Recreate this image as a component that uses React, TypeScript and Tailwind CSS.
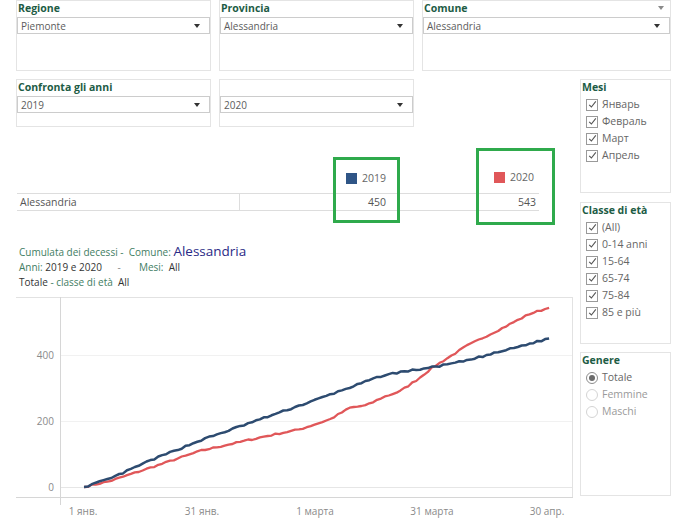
import React from 'react';

const FONT = { fontFamily: '"Open Sans", "Noto Sans", sans-serif' };

// anchor points read off the picture: [page x, cumulative deaths]
const BLUE: [number, number][] = [
  [84, 0], [110, 25], [150, 80], [201, 142], [260, 205], [314, 262], [350, 302],
  [383, 338], [400, 348], [433, 363], [467, 383], [500, 410], [549, 450],
];
const RED: [number, number][] = [
  [84, 0], [110, 18], [150, 58], [201, 110], [260, 150], [300, 175], [330, 205],
  [350, 240], [367, 248], [383, 272], [400, 290], [417, 325], [433, 363],
  [467, 428], [500, 478], [530, 525], [549, 543],
];

function seeded(seed: number) {
  let s = seed;
  return () => {
    s = (s * 16807) % 2147483647;
    return s / 2147483647;
  };
}

function buildPath(anchors: [number, number][], seed: number) {
  const rand = seeded(seed);
  const pts: string[] = [];
  for (let day = 0; day <= 119; day++) {
    const px = 84 + day * 3.908;
    let v = anchors[anchors.length - 1][1];
    for (let i = 0; i < anchors.length - 1; i++) {
      const [x0, v0] = anchors[i];
      const [x1, v1] = anchors[i + 1];
      if (px >= x0 && px <= x1) {
        v = v0 + ((px - x0) / (x1 - x0)) * (v1 - v0);
        break;
      }
    }
    if (day > 0 && day < 119) v += (rand() - 0.5) * 5;
    const x = px - 16;
    const y = 190 - v * 0.33;
    pts.push(`${x.toFixed(1)},${y.toFixed(1)}`);
  }
  return pts.join(' ');
}

function Caret({ color = '#333' }: { color?: string }) {
  return (
    <span
      className="block h-0 w-0 border-x-[3px] border-t-[4px] border-x-transparent"
      style={{ borderTopColor: color }}
    />
  );
}

function Dropdown({ value }: { value: string }) {
  return (
    <div className="flex h-[17px] items-center justify-between border border-[#cccccc] bg-white pl-[3px] pr-[9px] text-[10px] leading-none text-[#5c5c5c]">
      <span>{value}</span>
      <Caret />
    </div>
  );
}

function FilterBox({ label, value, className, menu }: { label?: string; value: string; className: string; menu?: boolean }) {
  return (
    <div className={`relative flex flex-col border border-[#e4e4e4] bg-white ${className}`}>
      <div className="flex h-[16px] items-center pl-[1px] text-[10.5px] font-bold text-[#1d5c45]">{label}</div>
      {menu && (
        <div className="absolute right-[6px] top-[5px]">
          <Caret color="#8a8a8a" />
        </div>
      )}
      <Dropdown value={value} />
    </div>
  );
}

function Check({ label }: { label: string }) {
  return (
    <div className="flex h-[17px] items-center gap-[4px] pl-[5px]">
      <span className="flex h-[12px] w-[12px] items-center justify-center border border-[#9a9a9a] bg-white">
        <svg width="9" height="9" viewBox="0 0 9 9">
          <path d="M1.2 4.8 L3.4 7 L7.8 1.4" fill="none" stroke="#555" strokeWidth="1.1" />
        </svg>
      </span>
      <span className="text-[10.5px] text-[#666]">{label}</span>
    </div>
  );
}

function Radio({ label, on }: { label: string; on?: boolean }) {
  return (
    <div className="flex h-[17px] items-center gap-[4px] pl-[5px]">
      <span className={`flex h-[12px] w-[12px] items-center justify-center rounded-full border ${on ? 'border-[#8c8c8c]' : 'border-[#d4d4d4]'}`}>
        {on && <span className="h-[6px] w-[6px] rounded-full bg-[#6b6b6b]" />}
      </span>
      <span className={`text-[10.5px] ${on ? 'text-[#666]' : 'text-[#9a9a9a]'}`}>{label}</span>
    </div>
  );
}

function Panel({ title, h, children }: { title: string; h: string; children: React.ReactNode }) {
  return (
    <div className={`flex flex-col border border-[#e4e4e4] bg-white ${h}`}>
      <div className="flex h-[16px] items-center pl-[1px] text-[10.5px] font-bold text-[#1d5c45]">{title}</div>
      {children}
    </div>
  );
}

function Chart() {
  const yTicks = [
    { y: 58, t: '400' },
    { y: 124, t: '200' },
    { y: 190, t: '0' },
  ];
  const xTicks = [
    { x: 67, t: '1 янв.' },
    { x: 186, t: '31 янв.' },
    { x: 299, t: '1 марта' },
    { x: 416, t: '31 марта' },
    { x: 531, t: '30 апр.' },
  ];
  return (
    <svg width="557" height="232" className="block" style={FONT}>
      <line x1="44" y1="58.5" x2="556" y2="58.5" stroke="#f1f1f1" />
      <line x1="44" y1="124.5" x2="556" y2="124.5" stroke="#f1f1f1" />
      <line x1="44" y1="190.5" x2="556" y2="190.5" stroke="#e6e6e6" />
      <line x1="0" y1="0.5" x2="557" y2="0.5" stroke="#e2e2e2" />
      <line x1="556.5" y1="0" x2="556.5" y2="200" stroke="#e2e2e2" />
      <line x1="0" y1="200.5" x2="557" y2="200.5" stroke="#d6d6d6" />
      <line x1="44.5" y1="0" x2="44.5" y2="208" stroke="#d6d6d6" />
      {yTicks.map(t => (
        <text key={t.t} x="38" y={t.y + 4} textAnchor="end" fontSize="10" fill="#8a8a8a">{t.t}</text>
      ))}
      {xTicks.map(t => (
        <text key={t.t} x={t.x} y="218" textAnchor="middle" fontSize="10" fill="#8a8a8a">{t.t}</text>
      ))}
      <polyline points={buildPath(RED, 7)} fill="none" stroke="#e05759" strokeWidth="2.3" strokeLinejoin="round" />
      <polyline points={buildPath(BLUE, 13)} fill="none" stroke="#2d4b70" strokeWidth="2.5" strokeLinejoin="round" />
    </svg>
  );
}

export default function App() {
  return (
    <div className="relative h-[529px] w-[700px] overflow-hidden bg-white pl-4" style={FONT}>
      <div className="flex gap-2">
        <FilterBox label="Regione" value="Piemonte" className="h-[71px] w-[195px]" />
        <FilterBox label="Provincia" value="Alessandria" className="h-[71px] w-[195px]" />
        <FilterBox label="Comune" value="Alessandria" className="h-[71px] w-[249px]" menu />
      </div>

      <div className="mt-2 flex gap-[7px]">
        <div className="w-[557px]">
          <div className="flex gap-2">
            <FilterBox label="Confronta gli anni" value="2019" className="h-[48px] w-[195px]" />
            <FilterBox value="2020" className="h-[48px] w-[195px]" />
          </div>

          <div className="ml-[1px] mt-[44px] grid h-[12px] grid-cols-[223px_149px_150px] items-center text-[10.5px] text-[#666]">
            <div />
            <div className="flex items-center justify-end gap-[5px] pr-[3px]">
              <span className="h-[11px] w-[11px] bg-[#2f5586]" />
              <span>2019</span>
            </div>
            <div className="flex -translate-y-[1px] items-center justify-end gap-[5px] pr-[5px]">
              <span className="h-[11px] w-[11px] bg-[#e05759]" />
              <span>2020</span>
            </div>
          </div>

          <div className="ml-[1px] mt-[10px] grid h-[18px] w-[522px] grid-cols-[223px_149px_150px] border-y border-[#dddddd] text-[10.5px] text-[#555]">
            <div className="flex items-center border-r border-[#dddddd] pl-[3px] pt-[1px]">Alessandria</div>
            <div className="flex items-center justify-end pr-[3px] pt-[1px]">450</div>
            <div className="flex items-center justify-end pr-[3px] pt-[1px]">543</div>
          </div>

          <div className="mt-[32px] pl-[3px]">
            <div className="flex h-[17px] items-baseline whitespace-pre text-[10px] leading-[17px] text-[#3f7d63]">
              <span>Cumulata dei decessi -  Comune: </span>
              <span className="text-[13.5px] text-[#2a2a86]">Alessandria</span>
            </div>
            <div className="flex h-[15px] items-center whitespace-pre text-[10px] text-[#333]">
              <span className="text-[#3f7d63]">Anni: </span>
              <span>2019 e 2020</span>
              <span className="text-[#888]">      -       </span>
              <span className="text-[#3f7d63]">Mesi:  </span>
              <span>All</span>
            </div>
            <div className="flex h-[15px] items-center whitespace-pre text-[10px] text-[#333]">
              <span>Totale </span>
              <span className="text-[#3f7d63]">- classe di età  </span>
              <span>All</span>
            </div>
          </div>

          <div className="mt-[7px]">
            <Chart />
          </div>
        </div>

        <div className="flex w-[91px] flex-col">
          <Panel title="Mesi" h="h-[114px]">
            <Check label="Январь" />
            <Check label="Февраль" />
            <Check label="Март" />
            <Check label="Апрель" />
          </Panel>
          <div className="h-[9px]" />
          <Panel title="Classe di età" h="h-[142px]">
            <Check label="(All)" />
            <Check label="0-14 anni" />
            <Check label="15-64" />
            <Check label="65-74" />
            <Check label="75-84" />
            <Check label="85 e più" />
          </Panel>
          <div className="h-[8px]" />
          <Panel title="Genere" h="h-[144px]">
            <Radio label="Totale" on />
            <Radio label="Femmine" />
            <Radio label="Maschi" />
          </Panel>
        </div>
      </div>

      {/* green highlight frames drawn over the table */}
      <div className="pointer-events-none absolute left-[333px] top-[157px] h-[66px] w-[67px] border-[3px] border-[#2faa4c]" />
      <div className="pointer-events-none absolute left-[476px] top-[148px] h-[77px] w-[79px] border-[3px] border-[#2faa4c]" />
    </div>
  );
}
